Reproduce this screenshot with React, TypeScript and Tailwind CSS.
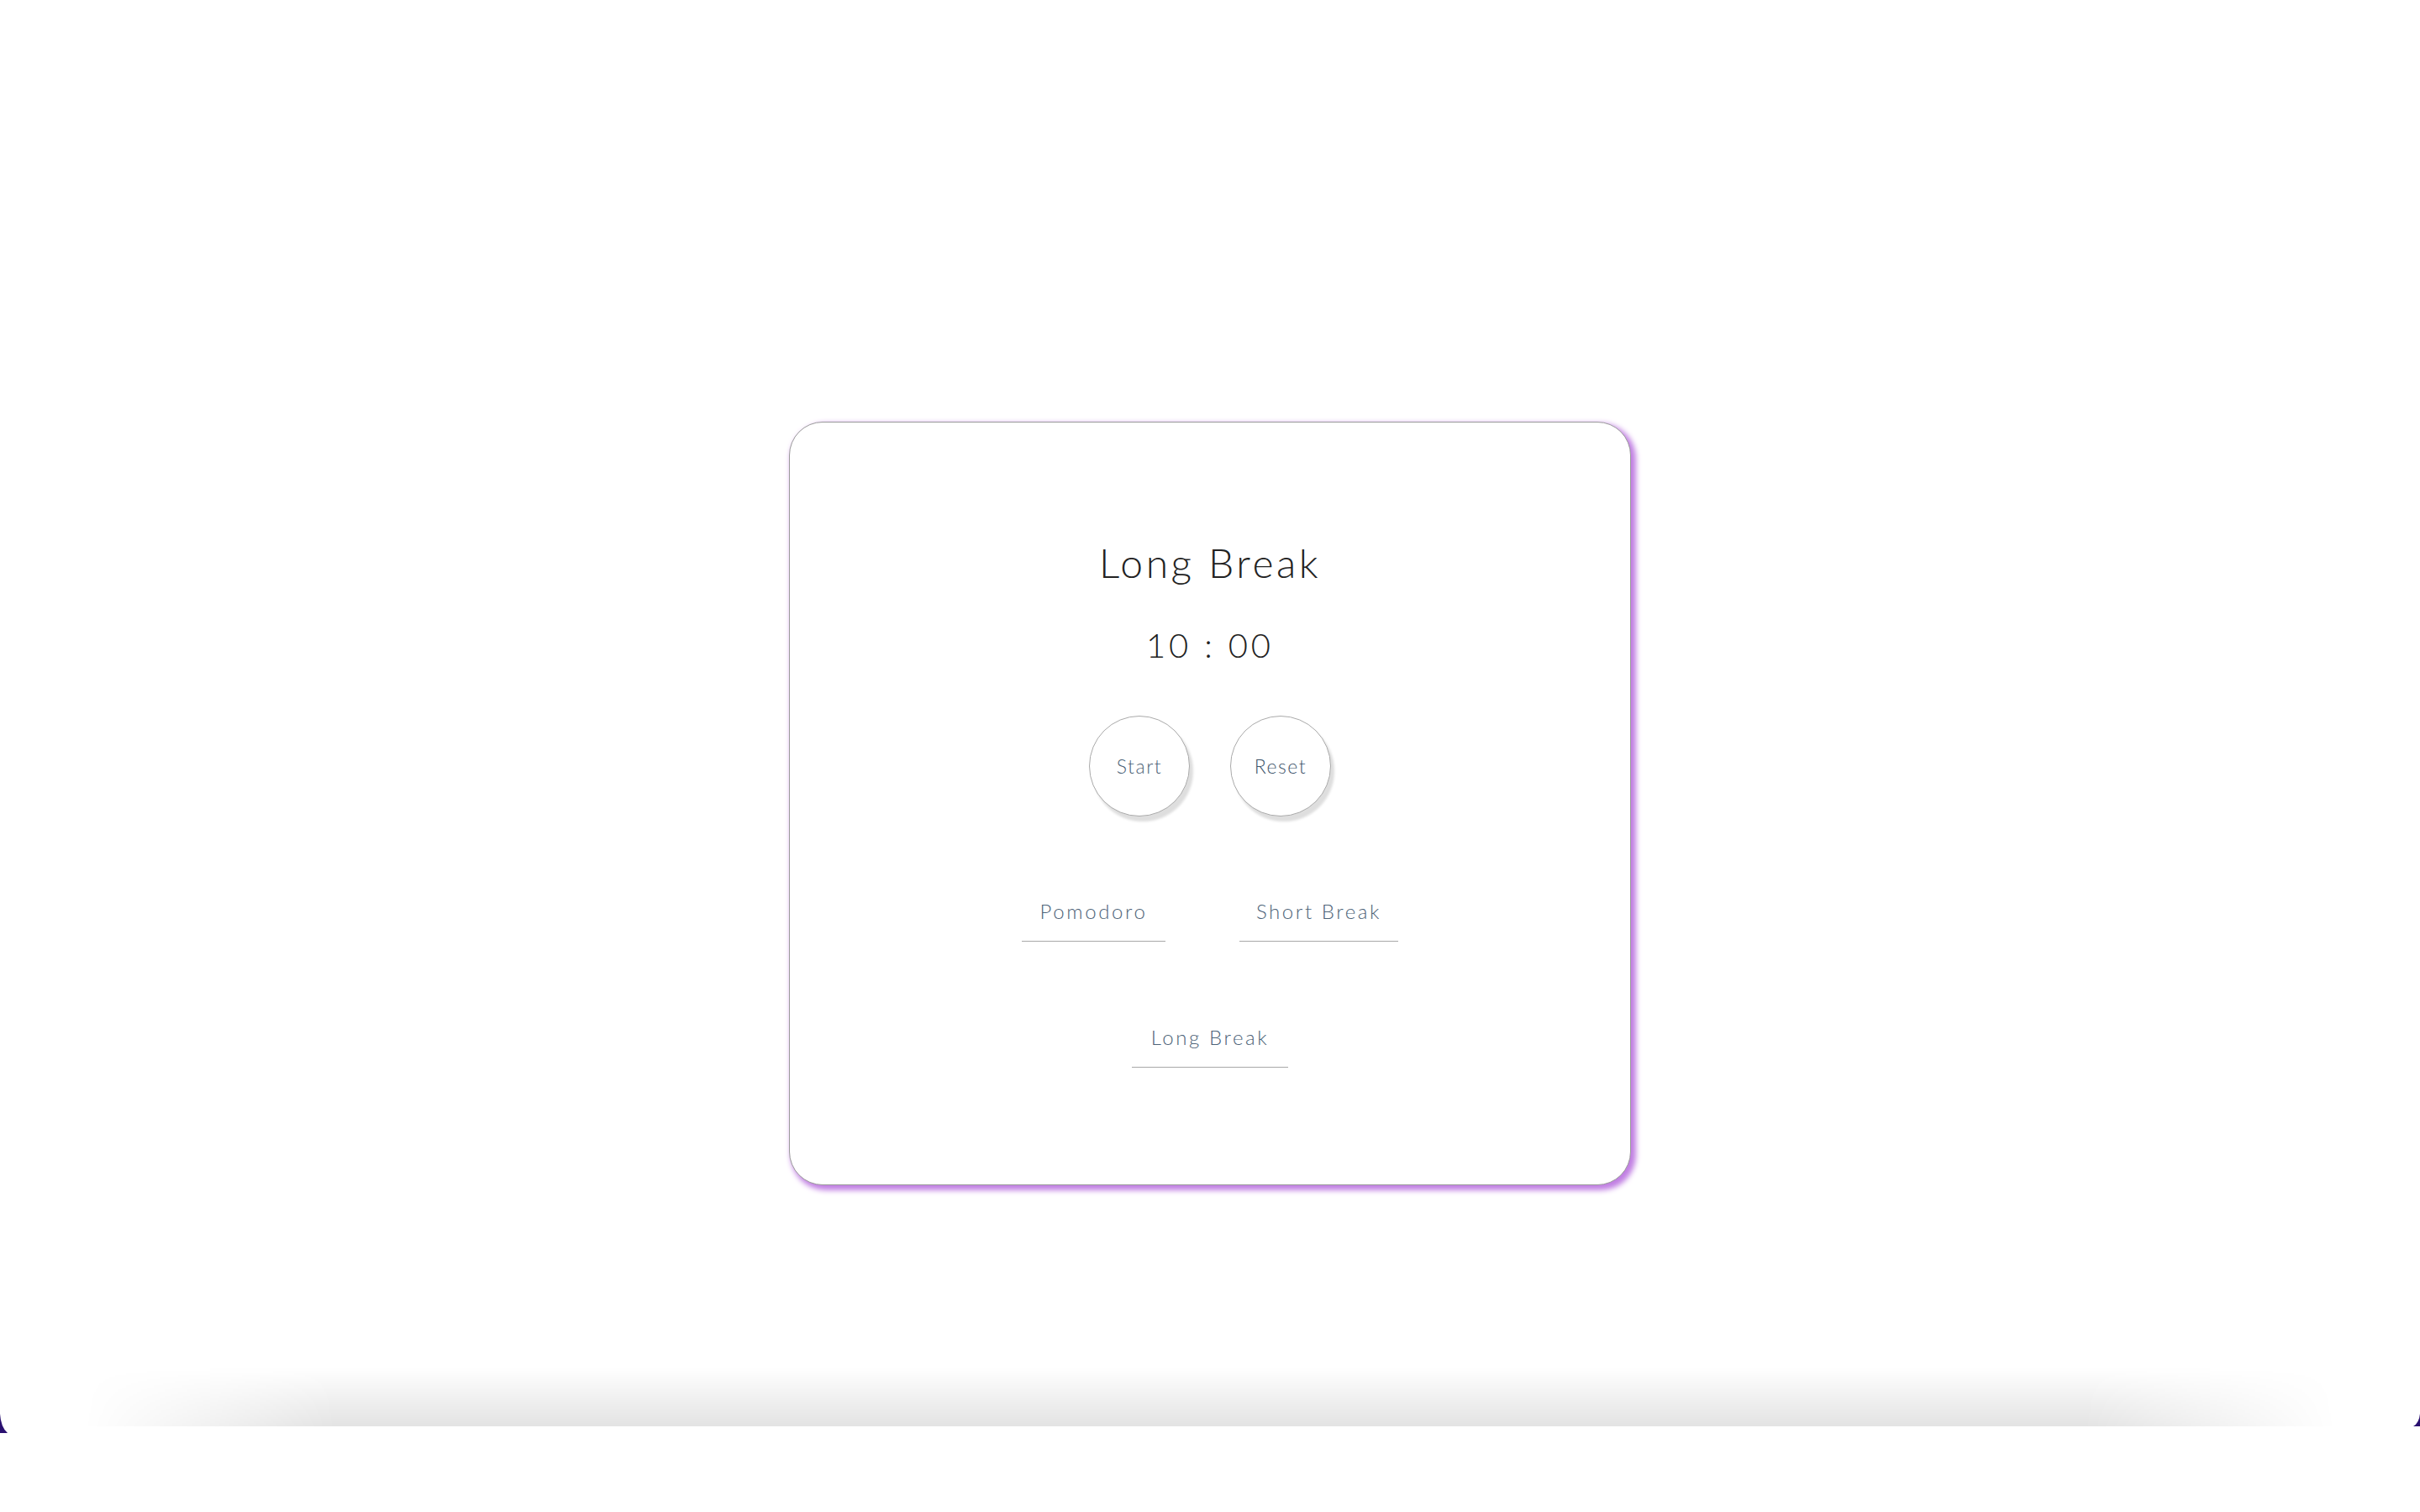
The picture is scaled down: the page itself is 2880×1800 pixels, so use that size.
import { useState } from "react";

const MODES = [
  { key: "pomodoro", label: "Pomodoro", minutes: 25, width: "w-[171px]" },
  { key: "short", label: "Short Break", minutes: 5, width: "w-[189px]" },
  { key: "long", label: "Long Break", minutes: 10, width: "w-[186px]" },
];

function pad(n: number) {
  return n.toString().padStart(2, "0");
}

export default function App() {
  const [mode, setMode] = useState("long");
  const current = MODES.find((m) => m.key === mode)!;
  const [seconds, setSeconds] = useState(current.minutes * 60);

  const pick = (key: string) => {
    const m = MODES.find((x) => x.key === key)!;
    setMode(key);
    setSeconds(m.minutes * 60);
  };

  return (
    <div className="flex h-screen w-full flex-col bg-white font-['Lato','Open_Sans',sans-serif]">
      <main className="flex flex-1 justify-center pt-[502px]">
        <div className="flex h-[909px] w-[1002px] flex-col items-center rounded-[40px] border border-[#9a9a9a] bg-white pt-[143px] shadow-[4px_4px_6px_2px_#c17fe3]">
          <h1 className="text-[48px] leading-none font-light tracking-[3.5px] text-[#222]">{current.label}</h1>
          <div className="mt-[54px] text-[40px] leading-none font-light tracking-[4px] text-[#222]">
            {pad(Math.floor(seconds / 60))} : {pad(seconds % 60)}
          </div>

          <div className="mt-[64px] flex gap-[48px]">
            <button className="flex h-[120px] w-[120px] items-center justify-center rounded-full border border-[#aaa] bg-white text-[23px] font-light tracking-[1.5px] text-[#4d6378] shadow-[4px_6px_3px_#dedede]">
              Start
            </button>
            <button
              onClick={() => setSeconds(current.minutes * 60)}
              className="flex h-[120px] w-[120px] items-center justify-center rounded-full border border-[#aaa] bg-white text-[23px] font-light tracking-[1.5px] text-[#3f566c] shadow-[4px_6px_3px_#dedede]"
            >
              Reset
            </button>
          </div>

          <div className="mt-[79px] flex w-[560px] flex-wrap justify-center gap-x-[88px] gap-y-[80px]">
            {MODES.map((m) => (
              <button
                key={m.key}
                onClick={() => pick(m.key)}
                className={`${m.width} border-b border-[#a8a8a8] pt-[22px] pb-[23px] text-[24px] leading-none font-light tracking-[2.6px] text-[#4d6378]`}
              >
                {m.label}
              </button>
            ))}
          </div>
        </div>
      </main>

      <footer className="relative h-[102px] shrink-0 bg-white">
        <div className="absolute bottom-full left-[100px] right-[100px] h-[70px] bg-gradient-to-t from-black/[0.11] to-transparent [mask-image:linear-gradient(to_right,transparent,black_300px,black_calc(100%-300px),transparent)]" />
        <svg className="absolute left-0 top-[-15px]" width="9" height="23" viewBox="0 0 9 23">
          <path d="M0 0 Q1 16 9 23 L0 23 Z" fill="#2a1070" />
        </svg>
        <svg className="absolute right-0 top-[-15px]" width="8" height="15" viewBox="0 0 8 15">
          <path d="M8 0 Q7 11 0 15 L8 15 Z" fill="#2a1070" />
        </svg>
      </footer>
    </div>
  );
}
